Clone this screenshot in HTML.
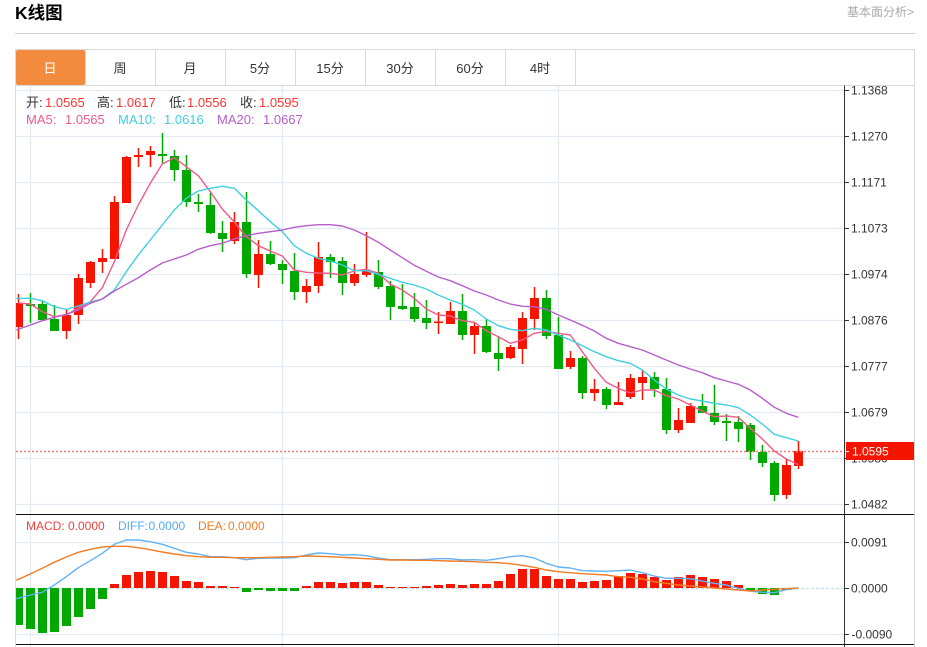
<!DOCTYPE html>
<html lang="zh-CN">
<head>
<meta charset="utf-8">
<title>K线图</title>
<style>
html,body{margin:0;padding:0;background:#fff;width:927px;height:647px;overflow:hidden}
svg{display:block;font-family:"Liberation Sans","Noto Sans CJK SC",sans-serif}
.t{font-size:13px;fill:#333;text-anchor:middle}
.a{font-size:12px;fill:#333}
.l1{font-size:13px}
.l2{font-size:12px}
</style>
</head>
<body>
<svg width="927" height="647" viewBox="0 0 927 647" xmlns="http://www.w3.org/2000/svg">
<defs><clipPath id="c"><rect x="16" y="86" width="828" height="561"/></clipPath></defs>

<text x="15" y="19" font-size="17.500" font-weight="bold" fill="#000">K线图</text>
<text x="914" y="16" font-size="12" fill="#aaa" text-anchor="end">基本面分析&gt;</text>
<path d="M15 33.500H915" stroke="#ccc" fill="none"/>

<!-- frame and tabs -->
<path d="M15.500 647V49.500H914.500V647M15.500 85.500H914.500" stroke="#d9d9d9" fill="none"/>
<path d="M85.500 50V85M155.500 50V85M225.500 50V85M295.500 50V85M365.500 50V85M435.500 50V85M505.500 50V85M575.500 50V85" stroke="#d9d9d9" fill="none"/>
<rect x="16" y="50" width="69" height="35" rx="2" fill="#f38b3e"/>
<text class="t" x="50" y="73" style="fill:#fff">日</text>
<text class="t" x="120" y="73">周</text>
<text class="t" x="190" y="73">月</text>
<text class="t" x="260" y="73">5分</text>
<text class="t" x="330" y="73">15分</text>
<text class="t" x="400" y="73">30分</text>
<text class="t" x="470" y="73">60分</text>
<text class="t" x="540" y="73">4时</text>

<!-- grid -->
<path d="M16 90.500H844M16 136.500H844M16 182.500H844M16 228.500H844M16 274.500H844M16 320.500H844M16 366.500H844M16 412.500H844M16 458.500H844M16 504.500H844M16 542.500H844M16 634.500H844M30.500 86V647M282.500 86V647M558.500 86V647" stroke="#e2ebf3" stroke-width="1.200" fill="none"/>
<path d="M16 588.500H844" stroke="#bfe2f5" stroke-width="1.400" stroke-dasharray="3 2" fill="none"/>

<g clip-path="url(#c)">
<g style="filter:blur(.3px)">
<!-- red candles -->
<path d="M18.500 294V339M66.500 309V339M78.500 274V324M90.500 261V288M102.500 249V273M114.500 196V259M126.500 156V203M138.500 148V167M150.500 146V167M234.500 212V244M258.500 240V288M306.500 279V303M318.500 242V293M354.500 264V286M366.500 232V277M438.500 312V334M450.500 302V324M474.500 322V354M510.500 345V359M522.500 312V364M534.500 287V330M570.500 351V369M594.500 379V401M618.500 382V405M630.500 374V399M642.500 370V400M678.500 408V433M690.500 403V423M786.500 459V499M798.500 441V469" stroke="#f51400" stroke-width="1.500" fill="none"/>
<path fill="#f51400" d="M14 303h9v24h-9zM62 315h9v16h-9zM74 278h9v37h-9zM86 262h9v21h-9zM98 258h9v4h-9zM110 202h9v57h-9zM122 157h9v46h-9zM134 155h9v2h-9zM146 151h9v4h-9zM230 222h9v19h-9zM254 254h9v21h-9zM302 286h9v6h-9zM314 257h9v29h-9zM350 274h9v9h-9zM362 270h9v5h-9zM434 321.500h9v1.500h-9zM446 311h9v13h-9zM470 326h9v9h-9zM506 347h9v11h-9zM518 318h9v31h-9zM530 298h9v21h-9zM566 358h9v9h-9zM590 389h9v4h-9zM614 402h9v3h-9zM626 378h9v19h-9zM638 377h9v6h-9zM674 420h9v10h-9zM686 406h9v17h-9zM782 465h9v30h-9zM794 451h9v15h-9z"/>
<!-- green candles -->
<path d="M30.500 293V323M42.500 301V320M54.500 305V331M162.500 133V163M174.500 150V181M186.500 155V207M198.500 194V212M210.500 193V234M222.500 221V252M246.500 192V278M270.500 241V265M282.500 260V284M294.500 253V300M330.500 254V278M342.500 257V295M378.500 260V289M390.500 281V320M402.500 284V310M414.500 293V322M426.500 300V329M462.500 294V340M486.500 319V353M498.500 336V371M546.500 290V339M558.500 317V369M582.500 356V399M606.500 387V409M654.500 372V397M666.500 378V434M702.500 394V413M714.500 385V425M726.500 414V441M738.500 416V442M750.500 423V460M762.500 445V467M774.500 461V501" stroke="#00a800" stroke-width="1.500" fill="none"/>
<path fill="#00a800" d="M26 304h9v2h-9zM38 304h9v16h-9zM50 319h9v12h-9zM158 154h9v2h-9zM170 156h9v14h-9zM182 170h9v32h-9zM194 202h9v2h-9zM206 205h9v28h-9zM218 233h9v6h-9zM242 222h9v52h-9zM266 254h9v10h-9zM278 264h9v6h-9zM290 271h9v21h-9zM326 257h9v5h-9zM338 261h9v22h-9zM374 272h9v15h-9zM386 286h9v21h-9zM398 306h9v3h-9zM410 307h9v12h-9zM422 318h9v5h-9zM458 311h9v24h-9zM482 326h9v26h-9zM494 353h9v6h-9zM542 298h9v38h-9zM554 335h9v34h-9zM578 358h9v35h-9zM602 389h9v16h-9zM650 377h9v12h-9zM662 389h9v41h-9zM698 406h9v7h-9zM710 413h9v9h-9zM722 421h9v2h-9zM734 422h9v7h-9zM746 425h9v27h-9zM758 452h9v11h-9zM770 463h9v32h-9z"/>

<!-- MA lines -->
<g fill="none" stroke-width="1.400" stroke-linejoin="round" transform="translate(.3 0)">
<polyline stroke="#ee5b8c" points="18,303 30,304 42,311.700 54,316.700 66,315 78,308 90,301.700 102,287.700 114,261.700 126,230 138,205 150,183.300 162,164 174,157.700 186,166.700 198,175.700 210,191.700 222,209 234,222 246,236.700 258,245.700 270,251 282,256 294,270 306,272.300 318,273 330,273.300 342,275 354,271 366,269.300 378,273.300 390,284 402,290 414,298.300 426,309 438,315 450,316 462,320.700 474,322.300 486,330.700 498,336.700 510,343.300 522,340 534,333.300 546,331.300 558,333.300 570,335 582,351.700 594,368.300 606,382.300 618,388.300 630,393 642,390 654,390 666,395.700 678,399 690,405 702,411 714,416.700 726,416 738,417.300 750,428.300 762,439 774,451 786,459 798,464.700"/>
<polyline stroke="#3fcfe0" points="16,298.300 30,298.300 42,300.700 54,306.700 66,309.300 78,306 90,302 102,299 114,290 126,271.700 138,255 150,240 162,225 174,210 186,198.300 198,191 210,188.300 222,186.300 234,188.300 246,200 258,210.700 270,221.700 282,231.700 294,245.700 306,253.300 318,258.300 330,261 342,265 354,270.700 366,270.700 378,274.300 390,278.300 402,282.300 414,285 426,289 438,295 450,300 462,304.300 474,310 486,319 498,325.700 510,329.300 522,330.700 534,328.300 546,330 558,335 570,340 582,345.700 594,351.700 606,356.700 618,360.700 630,363.300 642,370 654,380 666,389 678,395 690,399 702,401 714,403.300 726,405 738,407.700 750,415 762,424 774,434.300 786,437.700 798,441"/>
<polyline stroke="#b75ecb" points="16,330 30,325 42,320.700 54,317.300 66,314.300 78,310 90,303.300 102,299 114,291 126,284.300 138,277.700 150,270 162,263 174,259 186,255 198,249.300 210,245.700 222,243.300 234,239 246,235.700 258,233.300 270,231.700 282,230 294,227.300 306,225.700 318,224.700 330,224.700 342,226 354,230 366,235.700 378,242.300 390,250 402,257.700 414,265.300 426,271.300 438,277 450,280.700 462,285.700 474,291 486,295 498,300 510,304 522,306.300 534,306.700 546,309.300 558,315 570,320 582,325.300 594,331 606,338.300 618,343.300 630,346.700 642,350 654,355 666,360 678,365 690,369 702,372.700 714,377.700 726,381 738,384.300 750,390 762,398.300 774,407.300 786,413.300 798,417.300"/>
</g>

<!-- MACD red bars -->
<path fill="#f51400" d="M110 584h9v4h-9zM122 575h9v13h-9zM134 572h9v16h-9zM146 571h9v17h-9zM158 572h9v16h-9zM170 576h9v12h-9zM182 581h9v7h-9zM194 582h9v6h-9zM206 586h9v2h-9zM218 586h9v2h-9zM230 587h9v1h-9zM302 586h9v2h-9zM314 582h9v6h-9zM326 582h9v6h-9zM338 583h9v5h-9zM350 582h9v6h-9zM362 582h9v6h-9zM374 585h9v3h-9zM386 587h9v1h-9zM398 587h9v1h-9zM410 587h9v1h-9zM422 586h9v2h-9zM434 585h9v3h-9zM446 584h9v4h-9zM458 585h9v3h-9zM470 584h9v4h-9zM482 584h9v4h-9zM494 581h9v7h-9zM506 574h9v14h-9zM518 569h9v19h-9zM530 569h9v19h-9zM542 576h9v12h-9zM554 579h9v9h-9zM566 579h9v9h-9zM578 582h9v6h-9zM590 581h9v7h-9zM602 580h9v8h-9zM614 576h9v12h-9zM626 573h9v15h-9zM638 574h9v14h-9zM650 577h9v11h-9zM662 580h9v8h-9zM674 577h9v11h-9zM686 575h9v13h-9zM698 577h9v11h-9zM710 579h9v9h-9zM722 581h9v7h-9zM734 585h9v3h-9z"/>
<!-- MACD green bars -->
<path fill="#00a800" d="M14 588h9v37h-9zM26 588h9v41h-9zM38 588h9v45h-9zM50 588h9v44h-9zM62 588h9v38h-9zM74 588h9v29h-9zM86 588h9v21h-9zM98 588h9v11h-9zM242 588h9v4h-9zM254 588h9v2h-9zM266 588h9v3h-9zM278 588h9v3h-9zM290 588h9v3h-9zM746 588h9v3h-9zM758 588h9v6h-9zM770 588h9v7h-9zM782 588h9v2h-9z"/>

<g fill="none" stroke-width="1.400" stroke-linejoin="round" transform="translate(.3 0)">
<polyline stroke="#64b2f2" points="16,598.700 30,595 42,592.300 54,585 66,576.700 78,567.700 90,560.700 102,553.300 114,544.300 126,540 138,540 150,541.700 162,544.300 174,548.300 186,552.300 198,554 210,556.700 222,556.700 234,557.700 246,559.700 258,558.300 270,558 282,558 294,557.700 306,555 318,553 330,553.700 342,555 354,554.700 366,555.700 378,558 390,559.700 402,559.700 414,559.700 426,559.300 438,558.700 450,558.700 462,560 474,559.700 486,560.300 498,558.700 510,556.700 522,555.700 534,558 546,563.300 558,567 570,568 582,570.700 594,571 606,571.300 618,570.700 630,570 642,572.700 654,576 666,578.300 678,578.300 690,578.700 702,581 714,583.300 726,585 738,588.300 750,591 762,592.300 774,592.700 786,589.700 798,588"/>
<polyline stroke="#f37b23" points="16,580.300 30,574 42,568.300 54,562.300 66,557 78,552.300 90,549.300 102,547 114,546.300 126,546.300 138,547.700 150,549.700 162,552 174,554 186,555.700 198,556.700 210,557.300 222,557.300 234,557.700 246,557.700 258,557.700 270,557.300 282,557 294,556.700 306,556 318,556.300 330,556.700 342,557.300 354,558 366,558.700 378,559.300 390,560 402,560 414,560.300 426,560.300 438,560.700 450,561 462,561.300 474,561.700 486,562.300 498,562.700 510,563.700 522,565.300 534,567.300 546,570 558,571.700 570,572.700 582,573.700 594,574.300 606,575 618,576.700 630,577.300 642,579 654,581.700 666,583.300 678,585 690,586 702,587 714,588 726,589 738,590 750,591 762,590 774,589.300 786,588.700 798,588"/>
</g>
</g>
<!-- last price line -->
<path d="M16 451.500H844" stroke="#f77a7a" stroke-dasharray="2 2" fill="none" stroke-width="1.600"/>
</g>

<!-- axes -->
<path d="M844.500 85.500V647" stroke="#333" fill="none"/>
<path d="M16 514.500H914M16 644.500H914" stroke="#111" fill="none"/>
<path d="M845 90.500H849M845 136.500H849M845 182.500H849M845 228.500H849M845 274.500H849M845 320.500H849M845 366.500H849M845 412.500H849M845 458.500H849M845 504.500H849M845 542.500H849M845 588.500H849M845 634.500H849" stroke="#333" fill="none"/>
<g class="a">
<text class="a" x="851" y="94.500">1.1368</text>
<text class="a" x="851" y="140.500">1.1270</text>
<text class="a" x="851" y="186.500">1.1171</text>
<text class="a" x="851" y="232.500">1.1073</text>
<text class="a" x="851" y="278.500">1.0974</text>
<text class="a" x="851" y="324.500">1.0876</text>
<text class="a" x="851" y="370.500">1.0777</text>
<text class="a" x="851" y="416.500">1.0679</text>
<text class="a" x="851" y="462.500">1.0580</text>
<text class="a" x="851" y="508.500">1.0482</text>
<text class="a" x="851" y="546.500">0.0091</text>
<text class="a" x="851" y="592.500">0.0000</text>
<text class="a" x="851.500" y="638.500">-0.0090</text>
</g>
<rect x="846" y="442" width="68" height="18" fill="#f51400"/>
<path d="M845 451.500H849" stroke="#fff" fill="none"/>
<text x="852" y="455.500" font-size="12" fill="#fff">1.0595</text>

<!-- legends -->
<g class="l1">
<text class="l1" x="26" y="107" fill="#333">开:</text><text class="l1" x="45" y="107" fill="#f33">1.0565</text>
<text class="l1" x="97" y="107" fill="#333">高:</text><text class="l1" x="116" y="107" fill="#f33">1.0617</text>
<text class="l1" x="169" y="107" fill="#333">低:</text><text class="l1" x="187" y="107" fill="#f33">1.0556</text>
<text class="l1" x="240" y="107" fill="#333">收:</text><text class="l1" x="259" y="107" fill="#f33">1.0595</text>
<text class="l1" x="26" y="124" fill="#ee5b8c">MA5:</text><text class="l1" x="65" y="124" fill="#ee5b8c">1.0565</text>
<text class="l1" x="118" y="124" fill="#3fcfe0">MA10:</text><text class="l1" x="164" y="124" fill="#3fcfe0">1.0616</text>
<text class="l1" x="217" y="124" fill="#b75ecb">MA20:</text><text class="l1" x="263" y="124" fill="#b75ecb">1.0667</text>
</g>
<g class="l2">
<text class="l2" x="26" y="530" fill="#f04040">MACD:</text><text class="l2" x="68" y="530" fill="#f04040">0.0000</text>
<text class="l2" x="118" y="530" fill="#55aaf0">DIFF:</text><text class="l2" x="148.500" y="530" fill="#55aaf0">0.0000</text>
<text class="l2" x="198" y="530" fill="#f37b23">DEA:</text><text class="l2" x="228" y="530" fill="#f37b23">0.0000</text>
</g>
</svg>
</body>
</html>
